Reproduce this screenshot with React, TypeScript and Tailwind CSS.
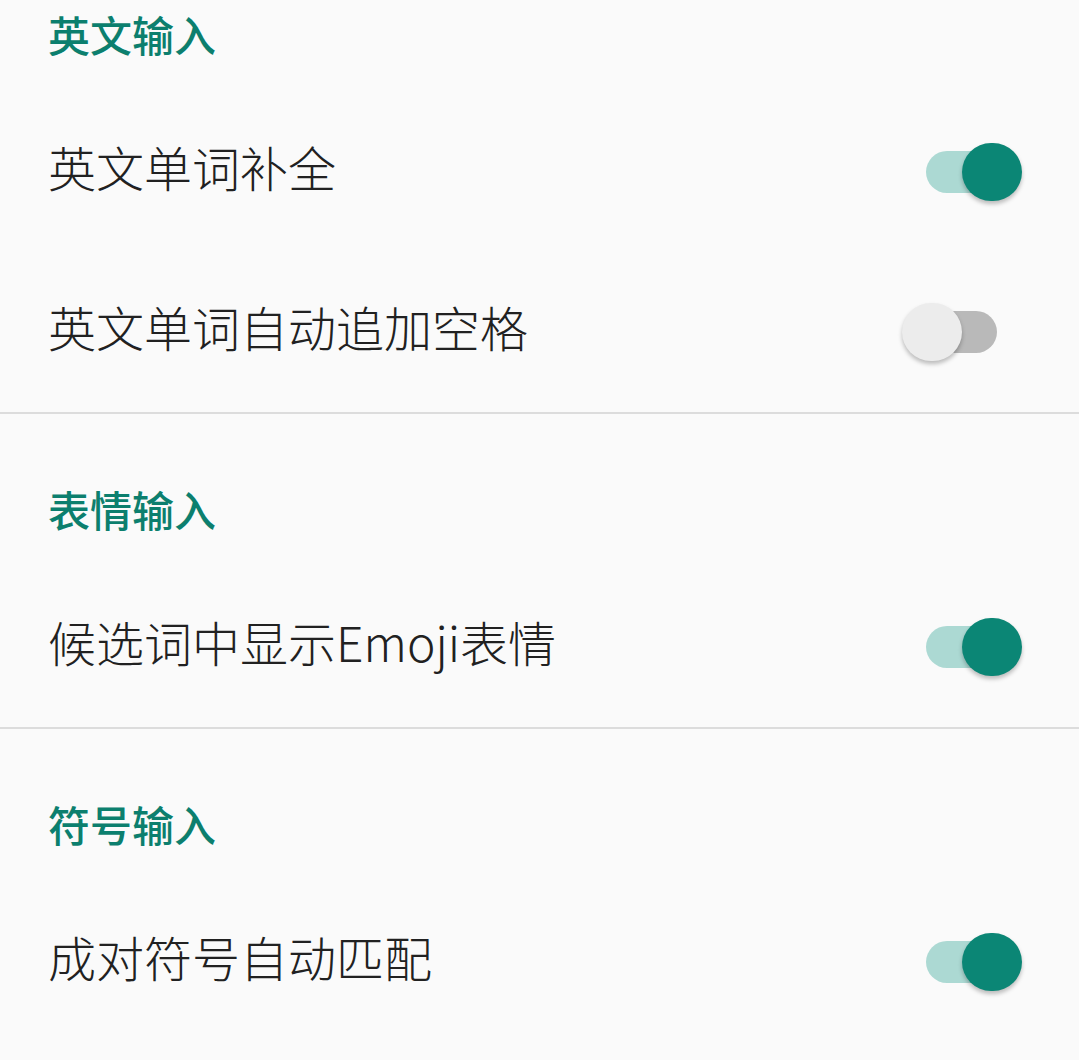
import React from 'react';

type Item = { label: string; on: boolean };
type Section = { title: string; items: Item[] };

const sections: Section[] = [
  {
    title: '英文输入',
    items: [
      { label: '英文单词补全', on: true },
      { label: '英文单词自动追加空格', on: false },
    ],
  },
  {
    title: '表情输入',
    items: [{ label: '候选词中显示Emoji表情', on: true }],
  },
  {
    title: '符号输入',
    items: [{ label: '成对符号自动匹配', on: true }],
  },
];

// Android-style switch: thumb overlaps the end of the track
const Toggle: React.FC<{ on: boolean }> = ({ on }) =>
  on ? (
    <div className="flex items-center w-[120px] shrink-0">
      <div className="ml-[24px] w-[86px] h-[42px] rounded-full bg-[#acd9d3]" />
      <div className="-ml-[50px] w-[60px] h-[58px] rounded-full bg-[#0b8675] shadow-[0_3px_4px_rgba(0,0,0,0.25)]" />
    </div>
  ) : (
    <div className="flex items-center w-[120px] shrink-0">
      <div className="relative z-10 w-[60px] h-[58px] rounded-full bg-[#ececec] shadow-[0_3px_4px_rgba(0,0,0,0.25)]" />
      <div className="-ml-[51px] w-[86px] h-[42px] rounded-full bg-[#b9b9b9]" />
    </div>
  );

export default function App() {
  return (
    <div
      className="w-full h-screen overflow-hidden bg-[#fafafa]"
      style={{ fontFamily: '"Noto Sans CJK SC", "Noto Sans", sans-serif' }}
    >
      {sections.map((section, i) => (
        <div key={section.title} className={i > 0 ? 'border-t-2 border-[#dcdcdc]' : ''}>
          {/* Category header */}
          <div
            className={`px-12 h-[153px] flex items-end pb-[34px] ${i === 0 ? '-mt-[61px]' : ''}`}
          >
            <span className="text-[42px] leading-[48px] font-medium text-[#0c7f6e]">
              {section.title}
            </span>
          </div>
          {section.items.map((item) => (
            <div key={item.label} className="h-[160px] flex items-center justify-between pl-12 pr-[57px]">
              <span className="text-[48px] leading-[56px] pb-[12px] font-light text-[#212121]">
                {item.label}
              </span>
              <Toggle on={item.on} />
            </div>
          ))}
        </div>
      ))}
    </div>
  );
}
